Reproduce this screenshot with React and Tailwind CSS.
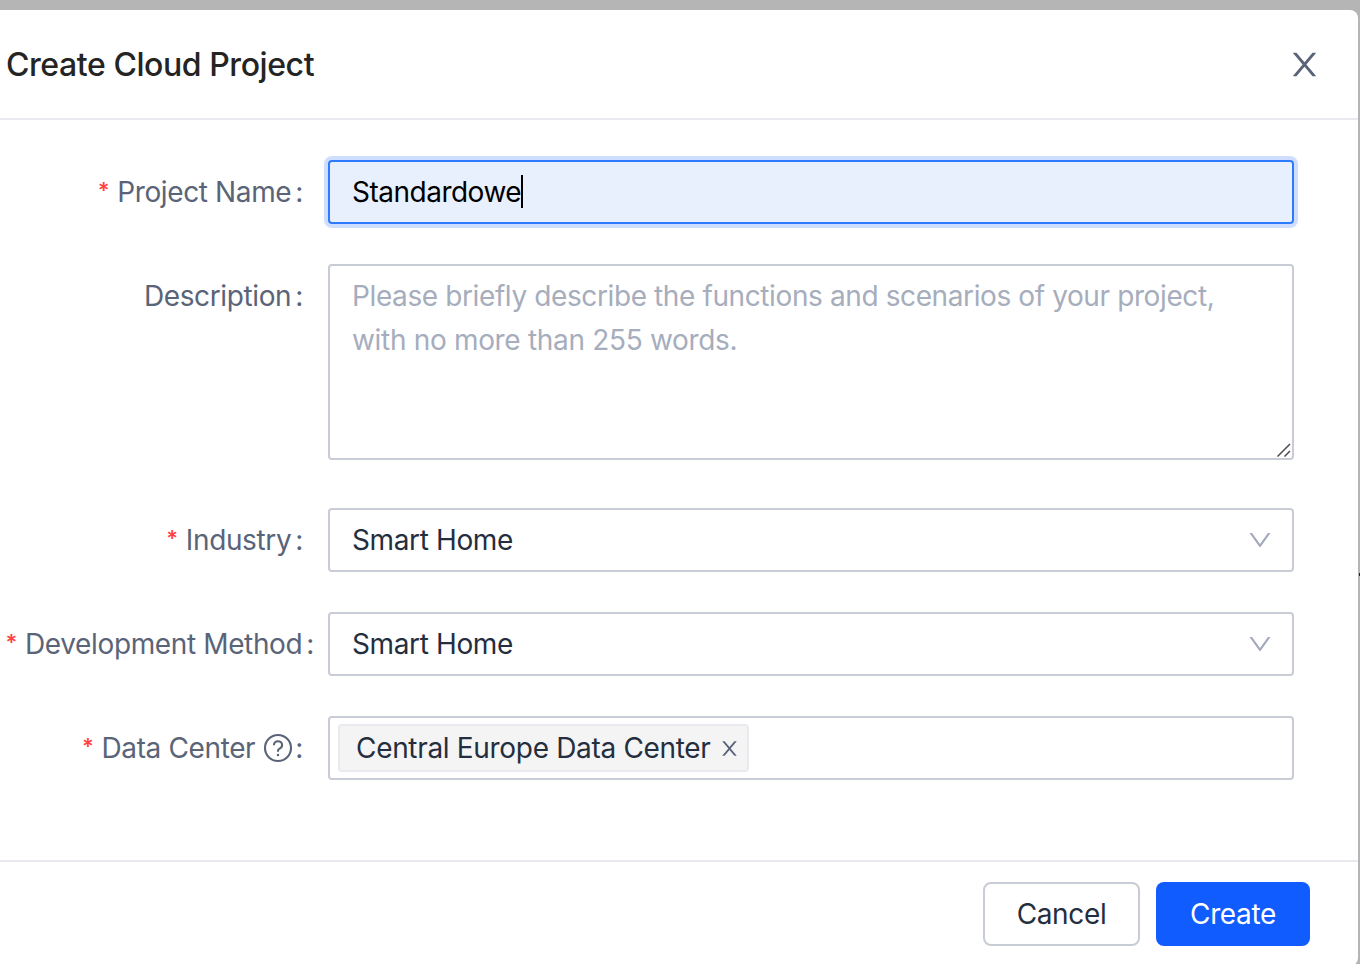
const CLOSE_PATH =
  "M563.8 512l262.5-312.9c4.4-5.2.7-13.1-6.1-13.1h-79.8c-4.7 0-9.2 2.1-12.3 5.7L511.6 449.8 295.1 191.7c-3-3.6-7.5-5.7-12.3-5.7H203c-6.8 0-10.5 7.9-6.1 13.1L459.4 512 196.9 824.9A7.95 7.95 0 0 0 203 838h79.8c4.7 0 9.2-2.1 12.3-5.7l216.5-258.1 216.5 258.1c3 3.6 7.5 5.7 12.3 5.7h79.8c6.8 0 10.5-7.9 6.1-13.1L563.8 512z";
const DOWN_PATH =
  "M884 256h-75c-5.1 0-9.9 2.5-12.9 6.6L512 654.2 227.9 262.6c-3-4.1-7.8-6.6-12.9-6.6h-75c-6.5 0-10.3 7.4-6.5 12.7l352.6 486.1c12.8 17.6 39 17.6 51.7 0l352.6-486.1c3.9-5.3.1-12.7-6.4-12.7z";

function Icon({ path, className }) {
  return (
    <svg viewBox="0 0 1024 1024" fill="currentColor" className={className} aria-hidden="true">
      <path d={path} />
    </svg>
  );
}

function HelpIcon() {
  return (
    <svg viewBox="0 0 32 32" fill="none" stroke="currentColor" strokeWidth="2.1" className="-mr-[3px] ml-[7px] size-8 shrink-0" aria-hidden="true">
      <circle cx="16" cy="16" r="13" />
      <path d="M11.9 13.3c0-2.4 1.8-4.1 4.1-4.1s4.1 1.6 4.1 3.8c0 1.7-1 2.9-2.5 3.6-1.1.5-1.6 1.2-1.6 2.3v.9" />
      <circle cx="16" cy="22.9" r="1.25" fill="currentColor" stroke="none" />
    </svg>
  );
}

function Field({ label, required, help, className = "pr-[25px]", children }) {
  return (
    <div className="flex items-start">
      <div className={`flex h-16 w-[328px] shrink-0 items-center justify-end whitespace-nowrap text-[#5a6478] ${className}`}>
        {required && <span className="mr-[8px] h-[38px] text-[22px] leading-[34px] font-semibold text-[#ff4242]">*</span>}
        <span>{label}</span>
        {help && <HelpIcon />}
        <span className="ml-[4px]">:</span>
      </div>
      {children}
    </div>
  );
}

function Select({ value }) {
  return (
    <div className="flex h-16 w-[966px] items-center justify-between rounded-[4px] border-2 border-[#c8ccd4] pr-[18px] pl-[22px]">
      <span>{value}</span>
      <Icon path={DOWN_PATH} className="size-7 text-[#a2aabb]" />
    </div>
  );
}

export default function App() {
  return (
    <div className="flex h-[964px] w-[1360px] overflow-hidden bg-[#b5b5b5] pt-[10px] font-['Inter',sans-serif] text-[28px] leading-[44px] font-[430] tracking-[-0.37px] text-[#242e3e]">
      <div className="flex h-[956px] w-[1358px] shrink-0 flex-col rounded-r-[8px] bg-white">
        <header className="flex h-[110px] shrink-0 items-center justify-between border-b-2 border-[#e9eaef] pr-[35px] pl-[6px]">
          <h1 className="pt-[2px] text-[32px] font-medium tracking-[-0.43px] text-[#242424]">Create Cloud Project</h1>
          <Icon path={CLOSE_PATH} className="size-[37px] text-[#5a6478]" />
        </header>

        <main className="flex h-[740px] shrink-0 flex-col gap-10 pt-10">
          <Field label="Project Name" required>
            <div className="flex h-16 w-[966px] items-center rounded-[4px] border-2 border-[#2e7bff] bg-[#e8effd] pl-[22px] text-black shadow-[0_0_0_4px_#cfdeff]">
              <span className="tracking-[-0.5px]">Standardowe</span>
              <span className="-mt-[2px] h-[33px] w-[2px] bg-black" />
            </div>
          </Field>
          <Field label="Description">
            <div className="relative mb-2 h-[196px] w-[966px] rounded-[4px] border-2 border-[#c8ccd4] px-[22px] pt-[8px] text-[#a6adbc]">
              <p>
                <span className="tracking-[-0.39px]">Please briefly describe the functions and scenarios of your project,</span>
                <br />
                <span className="tracking-[-0.32px]">with no more than 255 words.</span>
              </p>
              <svg viewBox="0 0 14 14" className="absolute right-[1px] bottom-[1px] size-[14px]" fill="none" stroke="#4c4c4c" strokeWidth="1.5" aria-hidden="true">
                <path d="M.5 13.5 13 1M7.5 13.5 13 8" />
              </svg>
            </div>
          </Field>
          <Field label="Industry" required>
            <Select value="Smart Home" />
          </Field>
          <Field label="Development Method" required className="pr-[14px]">
            <Select value="Smart Home" />
          </Field>
          <Field label="Data Center" required help>
            <div className="flex h-16 w-[966px] items-center rounded-[4px] border-2 border-[#c8ccd4] pl-[8px]">
              <div className="flex h-12 w-[411px] items-center justify-between rounded-[4px] border-2 border-[#e9eaef] bg-[#f4f4f4] pr-[6px] pl-[16px] whitespace-nowrap">
                <span className="tracking-[-0.32px]">Central Europe Data Center</span>
                <Icon path={CLOSE_PATH} className="size-[23px] shrink-0 text-[#5a6478]" />
              </div>
            </div>
          </Field>
        </main>

        <footer className="flex h-[106px] shrink-0 items-start justify-end gap-4 border-t-2 border-[#e9eaef] pt-5 pr-12">
          <button className="h-16 w-[157px] rounded-[8px] border-2 border-[#c8ccd4]">Cancel</button>
          <button className="h-16 w-[154px] rounded-[8px] bg-[#105cff] text-white">Create</button>
        </footer>
      </div>
      <div className="mt-[563px] ml-px h-[3px] w-px bg-[#222222]" />
    </div>
  );
}
